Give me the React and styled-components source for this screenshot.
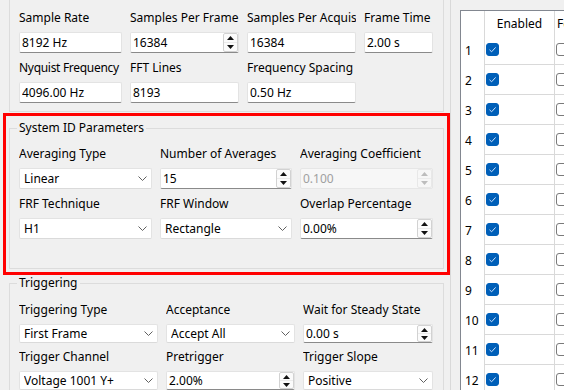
import React from 'react';
import styled, { createGlobalStyle } from 'styled-components';

const GlobalStyle = createGlobalStyle`
  html, body { margin: 0; padding: 0; background: #f0f0f0; overflow: hidden; }
  body { font-family: "Noto Sans", "Segoe UI", sans-serif; font-size: 12px; color: #000; }
  * { box-sizing: border-box; }
`;

const Window = styled.div`
  display: flex;
  width: 564px;
  height: 390px;
  overflow: hidden;
  background: #f0f0f0;
`;

const LeftPane = styled.div`
  width: 450px;
  flex: none;
  display: flex;
  flex-direction: column;
  padding-left: 9px;
`;

const Group = styled.section`
  position: relative;
  width: 435px;
  flex: none;
  border: 1px solid #dcdcdc;
  border-top-style: ${p => (p.$clipTop ? 'none' : 'solid')};
  margin-top: ${p => p.$mt || 0}px;
  padding: ${p => p.$pt || 0}px 10px ${p => p.$pb || 0}px 9px;
  ${p => p.$highlight && `
    &::after {
      content: '';
      position: absolute;
      left: -7px;
      top: -16px;
      right: -7px;
      bottom: -7px;
      border: 3px solid #ff0000;
      pointer-events: none;
    }
  `}
`;

const Title = styled.div`
  width: max-content;
  margin: -9px 0 0 -2px;
  padding: 0 2px;
  height: 16px;
  line-height: 16px;
  background: #f0f0f0;
  white-space: nowrap;
`;

const FieldGrid = styled.div`
  display: grid;
  grid-template-columns: ${p => p.$cols};
  column-gap: 8px;
  row-gap: ${p => p.$rowGap}px;
  margin-top: ${p => p.$mt || 0}px;
`;

const FieldWrap = styled.div`
  display: flex;
  flex-direction: column;
  gap: 6px;
  min-width: 0;
`;

const Label = styled.div`
  height: 16px;
  line-height: 16px;
  white-space: nowrap;
  overflow: hidden;
  letter-spacing: ${p => (p.$tight ? '-0.3px' : '0')};
`;

const Box = styled.div`
  height: ${p => p.$h}px;
  background: ${p => (p.$disabled ? '#f7f7f7' : '#ffffff')};
  border: 1px solid ${p => (p.$disabled ? '#e6e6e6' : '#e3e3e3')};
  border-bottom-color: ${p => (p.$underline && !p.$disabled ? '#8a8a8a' : p.$disabled ? '#e6e6e6' : '#dadada')};
  border-radius: 2px;
  display: flex;
  align-items: center;
  padding-left: ${p => p.$pl}px;
  color: ${p => (p.$disabled ? '#a0a0a0' : '#000')};
  white-space: nowrap;
  overflow: hidden;
`;

const BoxText = styled.span`
  flex: 1;
  min-width: 0;
  overflow: hidden;
`;

const SpinButtons = styled.div`
  flex: none;
  align-self: stretch;
  width: 15px;
  border: 1px solid ${p => (p.$disabled ? '#e8e8e8' : '#d2d2d2')};
  border-radius: 2px;
  background: ${p => (p.$disabled ? '#f7f7f7' : '#fbfbfb')};
  display: flex;
  flex-direction: column;
`;

const SpinHalf = styled.div`
  flex: 1;
  display: flex;
  align-items: center;
  justify-content: center;
  & + & { border-top: 1px solid ${p => (p.$disabled ? '#ececec' : '#e2e2e2')}; }
`;

const Chevron = styled.svg`
  flex: none;
  margin-right: 4px;
`;

const Arrow = ({ down, color }) => (
  <svg width="7" height="4" viewBox="0 0 7 4">
    <polygon points={down ? '0,0 7,0 3.5,4' : '0,4 7,4 3.5,0'} fill={color} />
  </svg>
);

const LineEdit = ({ value, h = 21 }) => (
  <Box $h={h} $pl={2} $underline>
    <BoxText>{value}</BoxText>
  </Box>
);

const SpinBox = ({ value, h = 21, disabled }) => (
  <Box $h={h} $pl={2} $underline $disabled={disabled}>
    <BoxText>{value}</BoxText>
    <SpinButtons $disabled={disabled}>
      <SpinHalf $disabled={disabled}><Arrow color={disabled ? '#bdbdbd' : '#111'} /></SpinHalf>
      <SpinHalf $disabled={disabled}><Arrow down color={disabled ? '#bdbdbd' : '#111'} /></SpinHalf>
    </SpinButtons>
  </Box>
);

const ComboBox = ({ value, h = 21 }) => (
  <Box $h={h} $pl={4}>
    <BoxText>{value}</BoxText>
    <Chevron width="9" height="5" viewBox="0 0 9 5">
      <polyline points="0.5,0.5 4.5,4.5 8.5,0.5" fill="none" stroke="#606060" strokeWidth="1" />
    </Chevron>
  </Box>
);

const Field = ({ label, tight, children }) => (
  <FieldWrap>
    <Label $tight={tight}>{label}</Label>
    {children}
  </FieldWrap>
);

/* ---------- table ---------- */

const TablePane = styled.div`
  flex: 1;
  min-width: 0;
  border-left: 1px solid #d9d9d9;
  padding: 10px 0 0 9px;
  overflow: hidden;
`;

const Table = styled.div`
  width: 300px;
  background: #ffffff;
  border-left: 1px solid #828790;
  border-top: 1px solid #828790;
`;

const Row = styled.div`
  display: flex;
  height: ${p => p.$h}px;
`;

const RowHead = styled.div`
  width: 23px;
  flex: none;
  padding-left: 4px;
  display: flex;
  align-items: center;
`;

const Cell = styled.div`
  width: ${p => p.$w}px;
  flex: none;
  border-left: 1px solid #d9d9d9;
  border-bottom: ${p => (p.$head ? 'none' : '1px solid #d9d9d9')};
  display: flex;
  align-items: center;
  justify-content: ${p => p.$justify || 'flex-start'};
  padding-left: ${p => p.$pl || 0}px;
  white-space: nowrap;
  overflow: hidden;
`;

const CheckBox = styled.div`
  width: 13px;
  height: 13px;
  flex: none;
  border-radius: 3px;
  background: ${p => (p.$checked ? '#005fb8' : '#ffffff')};
  border: 1px solid ${p => (p.$checked ? '#005fb8' : '#7a7a7a')};
  display: flex;
  align-items: center;
  justify-content: center;
`;

const Check = ({ checked }) => (
  <CheckBox $checked={checked}>
    {checked && (
      <svg width="11" height="11" viewBox="0 0 11 11">
        <polyline points="2.5,5.8 4.6,7.8 8.6,3.4" fill="none" stroke="#cfe3ff" strokeWidth="1" />
      </svg>
    )}
  </CheckBox>
);

const rows = Array.from({ length: 12 }, (_, i) => i + 1);

export default function App() {
  return (
    <>
      <GlobalStyle />
      <Window>
        <LeftPane>
          <Group $clipTop $pt={10} $pb={8}>
            <FieldGrid $cols="103px 109px 109px 69px" $rowGap={7}>
              <Field label="Sample Rate"><LineEdit value="8192 Hz" /></Field>
              <Field label="Samples Per Frame"><SpinBox value="16384" /></Field>
              <Field label="Samples Per Acquisition"><LineEdit value="16384" /></Field>
              <Field label="Frame Time"><LineEdit value="2.00 s" /></Field>
              <Field label="Nyquist Frequency" tight><LineEdit value="4096.00 Hz" /></Field>
              <Field label="FFT Lines"><LineEdit value="8193" /></Field>
              <Field label="Frequency Spacing"><LineEdit value="0.50 Hz" /></Field>
            </FieldGrid>
          </Group>

          <Group $mt={16} $pb={29} $highlight>
            <Title>System ID Parameters</Title>
            <FieldGrid $cols="133px 132px 133px" $rowGap={7} $mt={10}>
              <Field label="Averaging Type"><ComboBox value="Linear" /></Field>
              <Field label="Number of Averages"><SpinBox value="15" /></Field>
              <Field label="Averaging Coefficient"><SpinBox value="0.100" disabled /></Field>
              <Field label="FRF Technique"><ComboBox value="H1" /></Field>
              <Field label="FRF Window"><ComboBox value="Rectangle" /></Field>
              <Field label="Overlap Percentage"><SpinBox value="0.00%" /></Field>
            </FieldGrid>
          </Group>

          <Group $mt={14} $pb={10}>
            <Title>Triggering</Title>
            <FieldGrid $cols="139px 129px 130px" $rowGap={6} $mt={11}>
              <Field label="Triggering Type"><ComboBox value="First Frame" h={19} /></Field>
              <Field label="Acceptance"><ComboBox value="Accept All" h={19} /></Field>
              <Field label="Wait for Steady State"><SpinBox value="0.00 s" h={19} /></Field>
              <Field label="Trigger Channel"><ComboBox value="Voltage 1001 Y+" h={19} /></Field>
              <Field label="Pretrigger"><SpinBox value="2.00%" h={19} /></Field>
              <Field label="Trigger Slope"><ComboBox value="Positive" h={19} /></Field>
            </FieldGrid>
          </Group>
        </LeftPane>

        <TablePane>
          <Table>
            <Row $h={24}>
              <RowHead />
              <Cell $w={70} $head $justify="center">Enabled</Cell>
              <Cell $w={90} $head $pl={2}>Feedback</Cell>
            </Row>
            {rows.map(n => (
              <Row key={n} $h={30}>
                <RowHead>{n}</RowHead>
                <Cell $w={70} $pl={1}><Check checked /></Cell>
                <Cell $w={90} $pl={1}><Check /></Cell>
              </Row>
            ))}
          </Table>
        </TablePane>
      </Window>
    </>
  );
}
